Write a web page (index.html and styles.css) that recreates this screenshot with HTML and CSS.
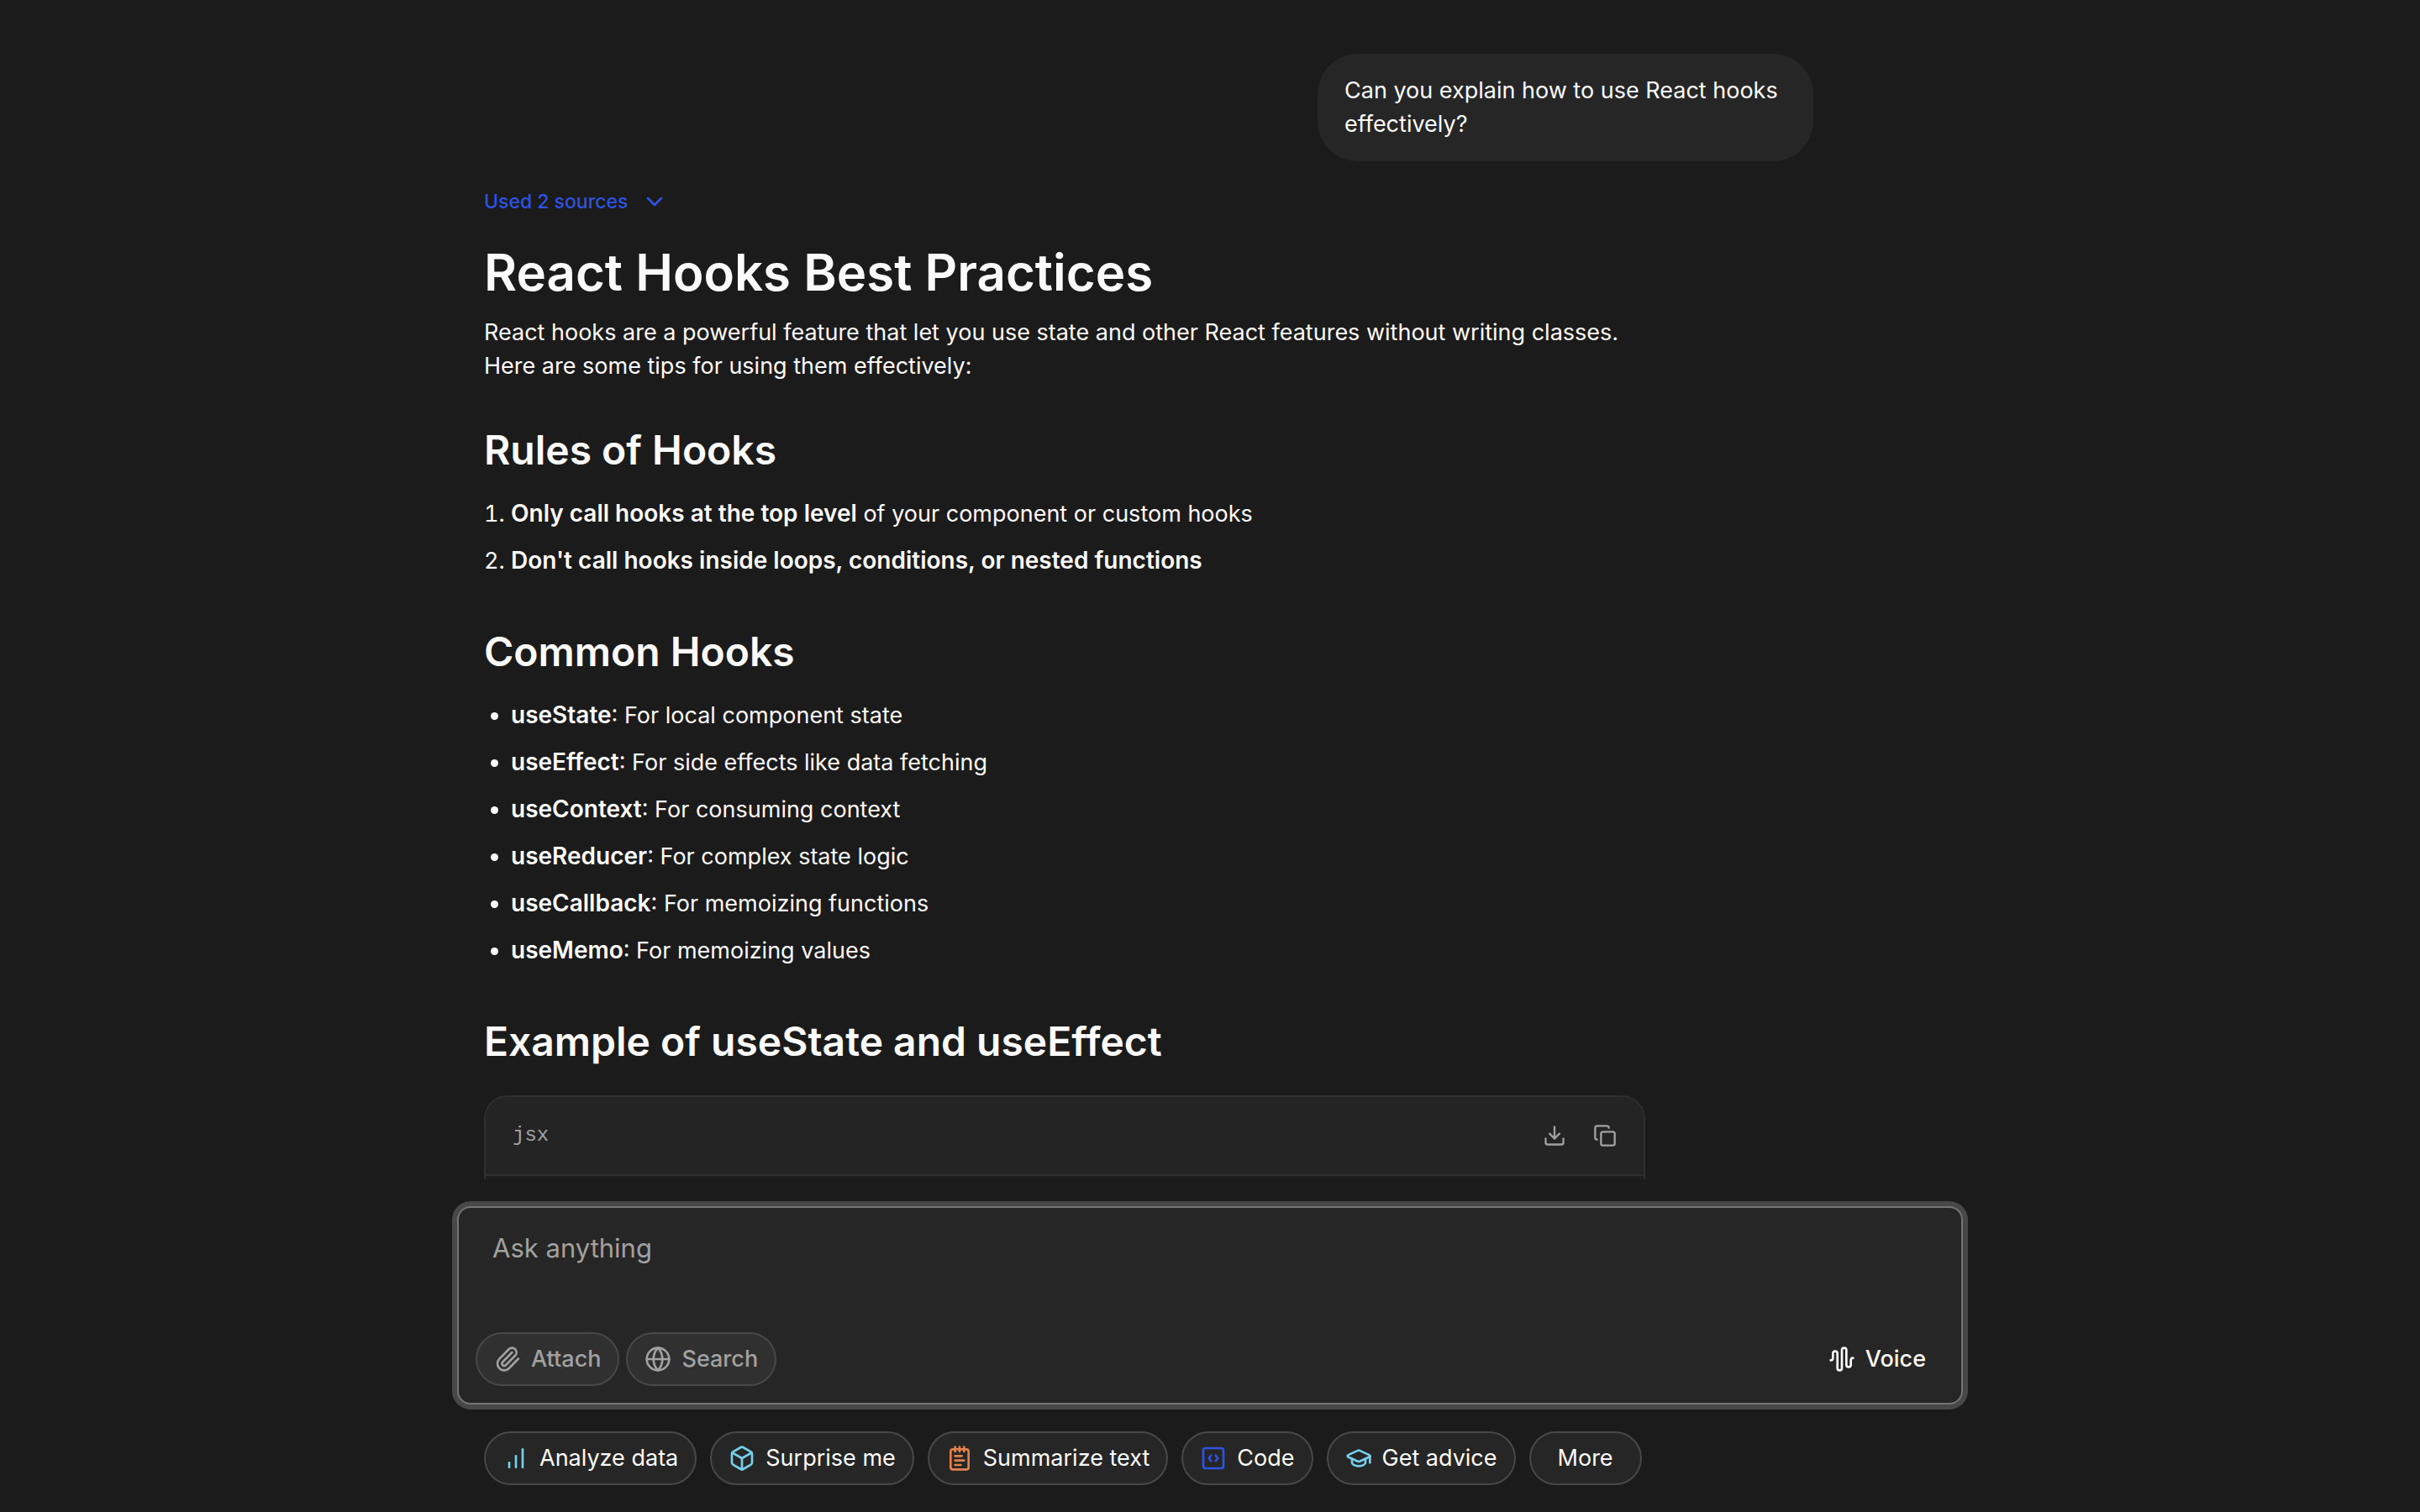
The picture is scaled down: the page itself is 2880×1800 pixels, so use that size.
FILE: index.html
```html
<!DOCTYPE html>
<html lang="en">
<head>
  <meta charset="UTF-8" />
  <meta name="viewport" content="width=device-width, initial-scale=1.0" />
  <title>React Hooks Chat</title>
  <link rel="stylesheet" href="styles.css">
</head>
<body>
  <main class="conversation">
    <div class="thread">
      <div class="message user">
        <div class="bubble">Can you explain how to use React hooks effectively?</div>
      </div>

      <article class="message answer">
        <button type="button" class="sources">
          Used 2 sources
          <svg class="icon" viewBox="0 0 24 24"><path d="m6 9 6 6 6-6"/></svg>
        </button>
        <h1>React Hooks Best Practices</h1>
        <p>React hooks are a powerful feature that let you use state and other React features without writing classes. Here are some tips for using them effectively:</p>

        <h2>Rules of Hooks</h2>
        <ol>
          <li><strong>Only call hooks at the top level</strong> of your component or custom hooks</li>
          <li><strong>Don't call hooks inside loops, conditions, or nested functions</strong></li>
        </ol>

        <h2>Common Hooks</h2>
        <ul>
          <li><strong>useState</strong>: For local component state</li>
          <li><strong>useEffect</strong>: For side effects like data fetching</li>
          <li><strong>useContext</strong>: For consuming context</li>
          <li><strong>useReducer</strong>: For complex state logic</li>
          <li><strong>useCallback</strong>: For memoizing functions</li>
          <li><strong>useMemo</strong>: For memoizing values</li>
        </ul>

        <h2>Example of useState and useEffect</h2>
        <div class="code-block">
          <div class="code-header">
            <span class="lang">jsx</span>
            <button type="button" class="icon-btn" aria-label="Download code">
              <svg class="icon code-icon" viewBox="0 0 24 24"><path d="M12 15V3"/><path d="M21 15v4a2 2 0 0 1-2 2H5a2 2 0 0 1-2-2v-4"/><path d="m7 10 5 5 5-5"/></svg>
            </button>
            <button type="button" class="icon-btn" aria-label="Copy code">
              <svg class="icon code-icon" viewBox="0 0 24 24"><rect width="14" height="14" x="8" y="8" rx="2"/><path d="M4 16c-1.1 0-2-.9-2-2V4c0-1.1.9-2 2-2h10c1.1 0 2 .9 2 2"/></svg>
            </button>
          </div>
          <div class="code-body"></div>
        </div>
      </article>
    </div>
  </main>

  <footer class="footer">
    <form class="composer">
      <textarea name="message" rows="1" placeholder="Ask anything" aria-label="Message"></textarea>
      <div class="toolbar">
        <button type="button" class="pill tool">
          <svg class="icon" viewBox="0 0 24 24"><path d="m16 6-8.414 8.586a2 2 0 0 0 2.829 2.829l8.414-8.586a4 4 0 1 0-5.657-5.657l-8.379 8.551a6 6 0 1 0 8.485 8.485l8.379-8.551"/></svg>
          Attach
        </button>
        <button type="button" class="pill tool">
          <svg class="icon" viewBox="0 0 24 24"><circle cx="12" cy="12" r="10"/><path d="M12 2a14.5 14.5 0 0 0 0 20 14.5 14.5 0 0 0 0-20"/><path d="M2 12h20"/></svg>
          Search
        </button>
        <button type="button" class="pill voice">
          <svg class="icon" viewBox="0 0 24 24"><path d="M2 13a2 2 0 0 0 2-2V7a2 2 0 0 1 4 0v13a2 2 0 0 0 4 0V4a2 2 0 0 1 4 0v13a2 2 0 0 0 4 0v-4a2 2 0 0 1 2-2"/></svg>
          Voice
        </button>
      </div>
    </form>

    <div class="suggestions">
      <button type="button" class="pill">
        <svg class="icon sky" viewBox="0 0 24 24"><path d="M6 20v-4"/><path d="M12 20V10"/><path d="M18 20V4"/></svg>
        Analyze data
      </button>
      <button type="button" class="pill">
        <svg class="icon sky" viewBox="0 0 24 24"><path d="M21 8a2 2 0 0 0-1-1.73l-7-4a2 2 0 0 0-2 0l-7 4A2 2 0 0 0 3 8v8a2 2 0 0 0 1 1.73l7 4a2 2 0 0 0 2 0l7-4A2 2 0 0 0 21 16Z"/><path d="m3.3 7 8.7 5 8.7-5"/><path d="M12 22V12"/></svg>
        Surprise me
      </button>
      <button type="button" class="pill">
        <svg class="icon orange" viewBox="0 0 24 24"><path d="M8 2v4"/><path d="M12 2v4"/><path d="M16 2v4"/><rect width="16" height="18" x="4" y="4" rx="2"/><path d="M8 10h6"/><path d="M8 14h8"/><path d="M8 18h5"/></svg>
        Summarize text
      </button>
      <button type="button" class="pill">
        <svg class="icon blue" viewBox="0 0 24 24"><path d="M10 9.5 8 12l2 2.5"/><path d="m14 9.5 2 2.5-2 2.5"/><rect x="3" y="3" width="18" height="18" rx="2"/></svg>
        Code
      </button>
      <button type="button" class="pill">
        <svg class="icon sky" viewBox="0 0 24 24"><path d="M21.42 10.922a1 1 0 0 0-.019-1.838L12.83 5.18a2 2 0 0 0-1.66 0L2.6 9.08a1 1 0 0 0 0 1.832l8.57 3.908a2 2 0 0 0 1.66 0z"/><path d="M22 10v6"/><path d="M6 12.5V16a6 3 0 0 0 12 0v-3.5"/></svg>
        Get advice
      </button>
      <button type="button" class="pill more">More</button>
    </div>
  </footer>
</body>
</html>
```
FILE: styles.css
```css
* { box-sizing: border-box; }
body {
  margin: 0;
  height: 100vh;
  display: flex;
  flex-direction: column;
  background: #1b1b1b;
  color: #fafafa;
  font-family: Inter, "Liberation Sans", sans-serif;
  font-size: 27px;
  line-height: 40px;
}
button, textarea { font: inherit; color: inherit; }
button { cursor: pointer; }

.icon { width: 32px; height: 32px; flex: none; fill: none; stroke: currentColor; stroke-width: 2; stroke-linecap: round; stroke-linejoin: round; }
.code-icon { width: 28px; height: 28px; }
.sky { color: #76d0eb; }
.orange { color: #e2814a; }
.blue { color: #2d53e0; }

/* conversation */
.conversation { flex: 1; min-height: 0; overflow: hidden; }
.thread { max-width: 1792px; margin: 0 auto; padding: 64px 32px 0; }
.message { max-width: 80%; }
.user { display: flex; justify-content: flex-end; margin: 0 146px 32px auto; }
.bubble { max-width: 590px; padding: 24px 32px; border-radius: 48px; background: #262626; }
.sources { display: flex; align-items: center; gap: 16px; padding: 0; border: 0; background: none; color: #2d53e0; font-size: 23px; font-weight: 500; line-height: 32px; }
h1 { margin: 32px 0 16px; font-size: 60px; line-height: 72px; font-weight: 600; }
h2 { margin: 48px 0 16px; font-size: 48px; line-height: 64px; font-weight: 600; }
p { margin: 0; }
ol, ul { margin: 0; padding-left: 32px; }
li { padding: 8px 0; }
strong { font-size: 28px; font-weight: 600; line-height: 1; }

.code-block { margin-top: 32px; border: 2px solid #303030; border-radius: 28px; overflow: hidden; }
.code-header { display: flex; align-items: center; gap: 32px; height: 94px; padding: 0 32px; background: #242424; border-bottom: 2px solid #303030; color: #a1a1a1; }
.lang { flex: 1; font-family: "Liberation Mono", monospace; font-size: 24px; }
.icon-btn { display: flex; padding: 0; border: 0; background: none; }
.code-body { height: 400px; background: #1e1e1e; }

/* composer */
.footer { width: 100%; max-width: 1792px; margin: 0 auto; padding: 32px 0; }
.composer { padding: 20px; border: 2px solid #747474; border-radius: 16px; background: #262626; box-shadow: 0 0 0 6px #484848; }
.composer textarea { display: block; width: 100%; height: 128px; padding: 8px 20px; border: 0; outline: 0; resize: none; background: none; font-size: 31px; }
.composer textarea::placeholder { color: #a1a1a1; opacity: 1; }
.toolbar { display: flex; gap: 8px; }

.pill { display: flex; align-items: center; gap: 12px; height: 64px; padding: 0 20px; border: 2px solid #484848; border-radius: 32px; background: #262626; }
.tool { background: #303030; color: #a1a1a1; font-weight: 500; }
.voice { margin-left: auto; border-color: transparent; font-weight: 500; }
.more { padding: 0 32px; }
.suggestions { display: flex; flex-wrap: wrap; gap: 16px; padding: 32px 32px 0; }
```
